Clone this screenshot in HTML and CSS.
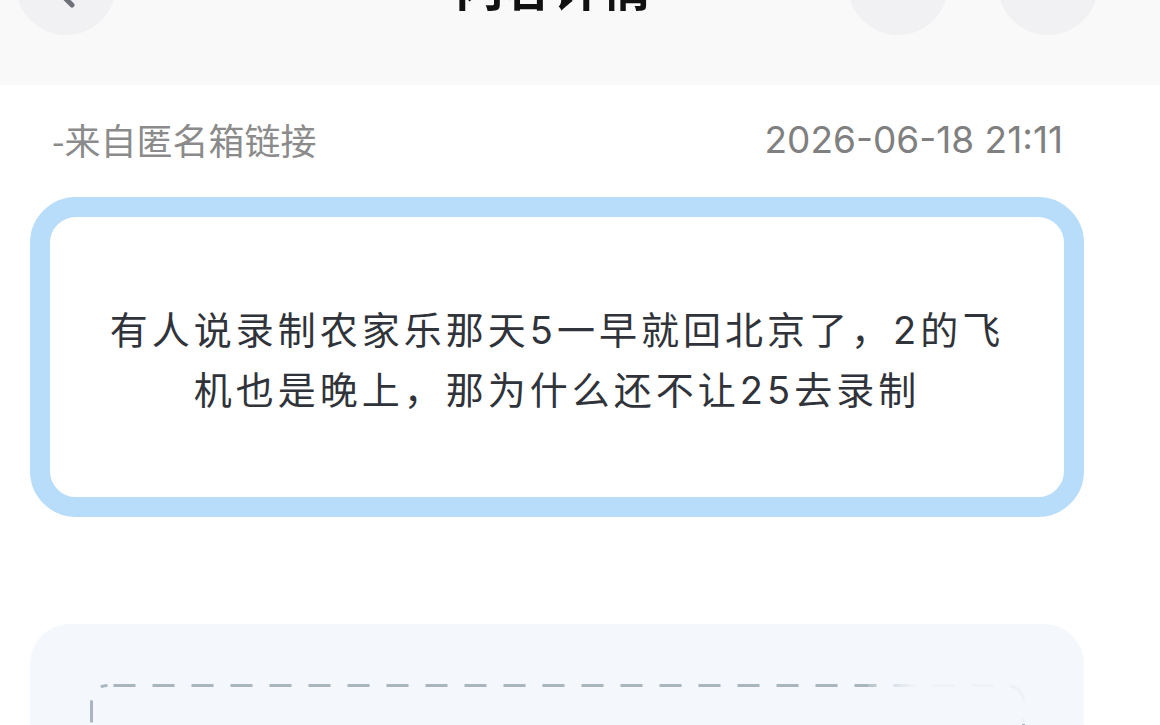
FILE: index.html
```html
<!DOCTYPE html>
<html lang="zh-CN">
<head>
    <meta charset="UTF-8">
    <meta name="viewport" content="width=device-width, initial-scale=1.0">
    <title>内容详情</title>
    <link rel="stylesheet" href="styles.css">
</head>
<body>
    <header class="topbar">
        <div class="topbar-row">
            <button class="round-btn">
                <svg width="100" height="100" viewBox="0 0 100 100">
                    <polyline points="56,30 36,50 56,70" fill="none" stroke="#6e7278" stroke-width="5" stroke-linecap="round" stroke-linejoin="round"/>
                </svg>
            </button>
            <h1 class="title">内容详情</h1>
            <div class="actions">
                <button class="round-btn">
                    <svg width="100" height="100" viewBox="0 0 100 100">
                        <circle cx="40" cy="58" r="6" fill="none" stroke="#8a8d92" stroke-width="2"/>
                        <circle cx="64" cy="58" r="6" fill="none" stroke="#8a8d92" stroke-width="2"/>
                    </svg>
                </button>
                <button class="round-btn"></button>
            </div>
        </div>
    </header>

    <main class="content">
        <div class="meta">
            <span class="source">-来自匿名箱链接</span>
            <span class="date">2026-06-18 21:11</span>
        </div>

        <div class="question">
            <p>有人说录制农家乐那天5一早就回北京了，2的飞机也是晚上，那为什么还不让25去录制</p>
        </div>

        <div class="reply-card">
            <div class="reply-box">
                <svg class="dash" width="935" height="140" viewBox="0 0 935 140">
                    <rect x="1.5" y="1.5" width="932" height="200" rx="16" fill="none" stroke="#a9b5bf" stroke-width="3" stroke-dasharray="22 17" stroke-dashoffset="-6"/>
                </svg>
                <div class="fade"></div>
            </div>
        </div>
    </main>
</body>
</html>
```

FILE: styles.css
```css
body {
    margin: 0;
    background: #fff;
    font-family: Inter, "Noto Sans CJK SC", sans-serif;
    overflow: hidden;
}

.topbar {
    height: 85px;
    background: #f9f9f9;
    overflow: hidden;
}

.topbar-row {
    display: flex;
    align-items: center;
    height: 100px;
    margin-top: -65px;
    padding: 0 62px 0 16px;
}

.round-btn {
    width: 100px;
    height: 100px;
    padding: 0;
    border: none;
    border-radius: 50%;
    background: #f1f1f3;
}

.round-btn svg {
    display: block;
}

.title {
    margin: 0 0 0 339px;
    font-family: "Noto Sans CJK SC", sans-serif;
    font-size: 49px;
    font-weight: 700;
    line-height: 100px;
    color: #111;
}

.actions {
    display: flex;
    gap: 50px;
    margin-left: auto;
}

.content {
    width: 1054px;
    margin: 0 0 0 30px;
}

.meta {
    display: flex;
    justify-content: space-between;
    align-items: center;
    height: 48px;
    margin-top: 30px;
    padding: 0 21px 0 22px;
}

.source {
    color: #8b8b8b;
    font-family: "Noto Sans CJK SC", sans-serif;
    font-size: 36px;
}

.date {
    color: #808080;
    font-size: 37px;
}

.question {
    margin-top: 34px;
    border: 20px solid #b8ddfa;
    border-radius: 46px;
    padding: 83px 50px 77px;
    text-align: center;
}

.question p {
    margin: 0;
    font-size: 38px;
    line-height: 60px;
    letter-spacing: 4px;
    color: #30343a;
}

.reply-card {
    margin-top: 107px;
    height: 200px;
    background: #f4f7fb;
    border-radius: 40px;
    padding: 60px 60px 0 60px;
    overflow: hidden;
}

.reply-box {
    position: relative;
    width: 935px;
    height: 140px;
}

.dash {
    display: block;
}

/* soft wash over the top-right of the dashed frame */
.fade {
    position: absolute;
    top: -10px;
    left: 778px;
    width: 220px;
    height: 50px;
    background: linear-gradient(90deg, rgba(244, 247, 251, 0.2), rgba(244, 247, 251, 0.95) 20%, rgba(244, 247, 251, 0.9));
}
```
